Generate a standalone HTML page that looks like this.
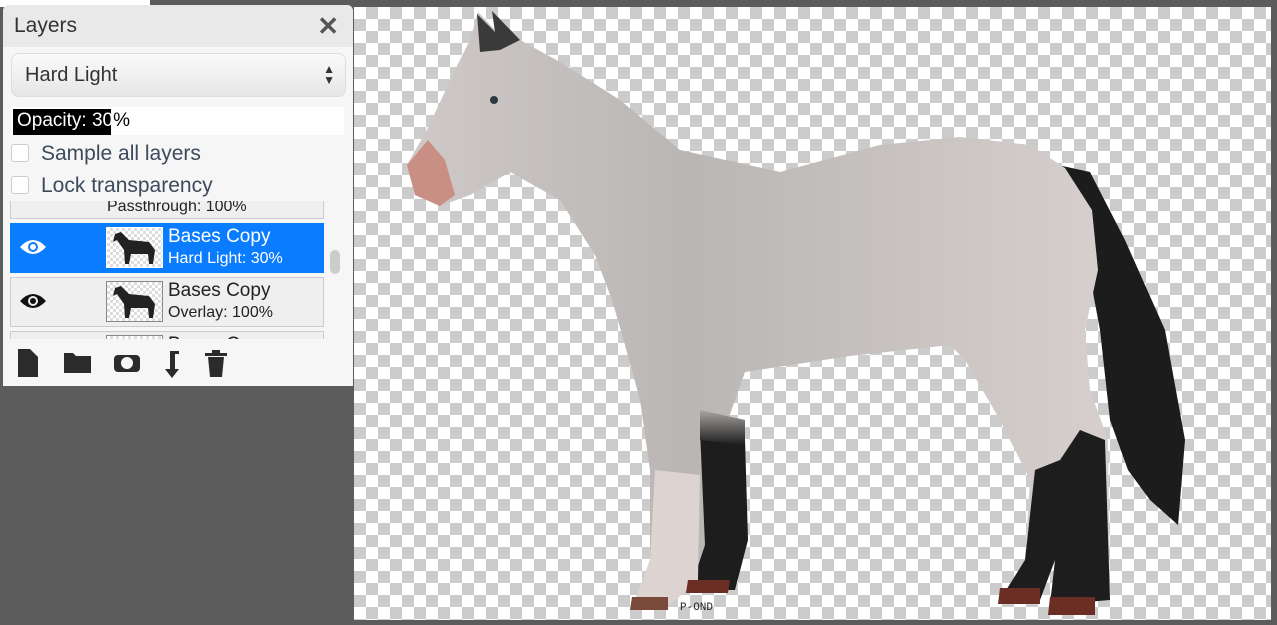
<!DOCTYPE html>
<html><head><style>
html,body{margin:0;padding:0;width:1277px;height:625px;overflow:hidden;background:#5c5c5c;font-family:"Liberation Sans",sans-serif}
#canvas{position:absolute;left:354px;top:7px;width:917px;height:613px;background-color:#fff;
background-image:conic-gradient(#cccccc 25%,#fff 0 50%,#cccccc 0 75%,#fff 0);background-size:24px 24px}
#leftwhite{position:absolute;left:0;top:0;width:150px;height:7px;background:#fff}
#panel{position:absolute;left:3px;top:5px;width:350px;height:381px;background:#f6f6f6;border-radius:6px 6px 0 0;overflow:hidden}
.hdr{height:42px;background:#e9e9e9;font-size:21px;color:#333;line-height:42px;padding-left:11px;position:relative}
.x{position:absolute;right:14px;top:0;font-size:26px;font-weight:bold;color:#555}
.sel{position:absolute;left:8px;top:48px;width:335px;height:44px;border:1px solid #ddd;border-radius:8px;background:linear-gradient(#fafafa,#e6e6e6);font-size:20px;color:#333;line-height:42px;padding-left:13px;box-sizing:border-box}
.sel span{position:absolute;right:10px;top:0;font-size:12px;line-height:11px;padding-top:10px}
.op{position:absolute;left:8px;top:102px;width:333px;height:28px;background:#fff}
.op .bar{position:absolute;left:2px;top:2px;width:98px;height:26px;background:#000}
.op .t{position:absolute;left:6px;top:3px;font-size:19px;color:#fff}
.op .t b{font-weight:normal;color:#000}
.cb{position:absolute;left:8px;width:16px;height:16px;border:1px solid #ccc;border-radius:3px;background:#fff}
.lbl{position:absolute;left:38px;font-size:21px;color:#3c4a5c}
.list{position:absolute;left:7px;top:196px;width:316px;height:138px;overflow:hidden}
.row{position:absolute;left:0;width:312px;height:48px;border:1px solid #ccc;background:#efefef}
.row.a{background:#0a7cff;border-color:#0a7cff}
.thumb{position:absolute;left:95px;top:3px;width:55px;height:39px;border:1px solid #888;background-color:#fff;background-image:conic-gradient(#ddd 25%,#fff 0 50%,#ddd 0 75%,#fff 0);background-size:6px 6px}
.n{position:absolute;left:157px;top:2px;font-size:19px;color:#222}
.m{position:absolute;left:157px;top:26px;font-size:16px;color:#222}
.a .n,.a .m{color:#fff}
.eye{position:absolute;left:8px;top:14px}
.scroll{position:absolute;left:327px;top:245px;width:10px;height:24px;border-radius:5px;background:#ccc}
.tools{position:absolute;left:14px;top:342px}
</style></head><body>
<div id="leftwhite"></div>
<div id="canvas">
<svg width="917" height="613" viewBox="354 7 917 613" style="position:absolute;left:0;top:0">
<defs>
<linearGradient id="g" x1="0" y1="0" x2="1" y2="0"><stop offset="0" stop-color="#cfc9c8"/><stop offset=".4" stop-color="#b9b6b4"/><stop offset="1" stop-color="#d6cfcd"/></linearGradient>
<linearGradient id="v" x1="0" y1="0" x2="0" y2="1"><stop offset="0" stop-color="#a9a6a4"/><stop offset="1" stop-color="#1d1d1d"/></linearGradient>
</defs>
<path d="M1058,165 L1090,172 L1125,240 L1165,330 L1185,440 L1178,525 L1150,500 L1128,470 L1110,420 L1100,330 L1085,250 Z" fill="#1c1c1c"/>
<path d="M470,40 L478,12 L495,30 L492,10 L520,40 L560,62 L620,100 L680,150 L780,172 L880,145 L960,137 L1030,145 L1065,168 L1092,210 L1098,270 L1085,330 L1090,390 L1108,440 L1110,600 L1050,605 L1055,560 L1040,600 L1000,600 L1025,560 L1030,480 L1000,420 L965,360 L950,345 L850,356 L745,372 L728,420 L745,440 L748,540 L735,590 L690,590 L700,540 L698,580 L670,605 L632,608 L650,560 L650,470 L640,400 L625,345 L612,300 L595,255 L560,200 L510,172 L470,195 L440,206 L415,195 L407,165 L428,128 L455,70 Z" fill="url(#g)"/>
<path d="M477,14 L495,32 L492,11 L520,40 L500,50 L480,52 Z" fill="#3a3a3a"/>
<path d="M407,165 L428,140 L445,160 L455,195 L440,206 L415,195 Z" fill="#c98f84"/>
<path d="M700,430 L745,440 L748,540 L735,590 L690,590 L705,545 Z" fill="#1d1d1d"/>
<path d="M700,410 L745,420 L745,445 L700,440Z" fill="url(#v)"/>
<path d="M655,470 L700,475 L698,580 L670,605 L632,608 L650,560 Z" fill="#ddd3d1"/>
<path d="M1035,470 L1060,460 L1080,430 L1105,440 L1110,600 L1050,605 L1055,560 L1040,600 L1000,600 L1025,560 Z" fill="#1d1d1d"/>
<path d="M632,597 L668,597 L668,610 L630,610 Z" fill="#7a4a3a"/>
<path d="M688,580 L730,580 L728,593 L686,593 Z" fill="#6a2e25"/>
<path d="M1000,588 L1040,588 L1040,604 L998,604 Z" fill="#6a2e25"/>
<path d="M1050,597 L1095,597 L1095,615 L1048,615 Z" fill="#6a2e25"/>
<circle cx="494" cy="100" r="4" fill="#2a3a40"/>
<text x="680" y="610" font-family="Liberation Mono,monospace" font-size="11" fill="#222">P-OND</text>
</svg>
</div>
<div id="panel">
<div class="hdr">Layers<span class="x">✕</span></div>
<div class="sel">Hard Light<span>▲<br>▼</span></div>
<div class="op"><div class="bar"></div><div class="t">Opacity: 30<b>%</b></div></div>
<div class="cb" style="top:139px"></div><div class="lbl" style="top:137px">Sample all layers</div>
<div class="cb" style="top:171px"></div><div class="lbl" style="top:169px">Lock transparency</div>
<div class="list">
 <div class="row" style="top:-32px"><div class="m" style="left:96px;top:28px">Passthrough: 100%</div></div>
 <div class="row a" style="top:22px"><svg class="eye" width="28" height="18" viewBox="0 0 28 18"><path d="M1,9 Q14,-5 27,9 Q14,23 1,9Z" fill="#fff"/><circle cx="14" cy="9" r="5" fill="#0a7cff"/><circle cx="14" cy="9" r="3" fill="#fff"/></svg><div class="thumb" style="border-color:#fff"><svg width="55" height="39"><path d="M8,6 L14,4 L22,12 L42,14 L48,22 L46,36 L42,36 L41,26 L24,26 L22,36 L18,36 L17,22 L10,12 L6,14Z" fill="#222"/></svg></div><div class="n">Bases Copy</div><div class="m">Hard Light: 30%</div></div>
 <div class="row" style="top:76px"><svg class="eye" width="28" height="18" viewBox="0 0 28 18"><path d="M1,9 Q14,-5 27,9 Q14,23 1,9Z" fill="#111"/><circle cx="14" cy="9" r="5" fill="#efefef"/><circle cx="14" cy="9" r="3" fill="#111"/></svg><div class="thumb"><svg width="55" height="39"><path d="M8,6 L14,4 L22,12 L42,14 L48,22 L46,36 L42,36 L41,26 L24,26 L22,36 L18,36 L17,22 L10,12 L6,14Z" fill="#222"/></svg></div><div class="n">Bases Copy</div><div class="m">Overlay: 100%</div></div>
 <div class="row" style="top:130px"><div class="thumb"></div><div class="n">Bases Copy</div></div>
</div>
<div class="scroll"></div>
<svg class="tools" width="220" height="32" viewBox="0 0 220 32">
<path d="M1,2 H13 L21,10 V30 H1Z" fill="#2b2b2b"/>
<path d="M47,6 H56 L59,9 H74 V26 H47Z" fill="#2b2b2b"/>
<rect x="97" y="8" width="26" height="17" rx="4" fill="#2b2b2b"/><circle cx="110" cy="16" r="6" fill="#f6f6f6"/>
<path d="M153,4 H162 V7 H158 V22 H162 L155,31 L148,22 H153Z" fill="#2b2b2b"/>
<path d="M188,6 H210 V9 H188Z M195,3 H203 V6 H195Z M191,10 H207 L205,30 H193Z" fill="#2b2b2b"/>
</svg>
</div>
</body></html>
